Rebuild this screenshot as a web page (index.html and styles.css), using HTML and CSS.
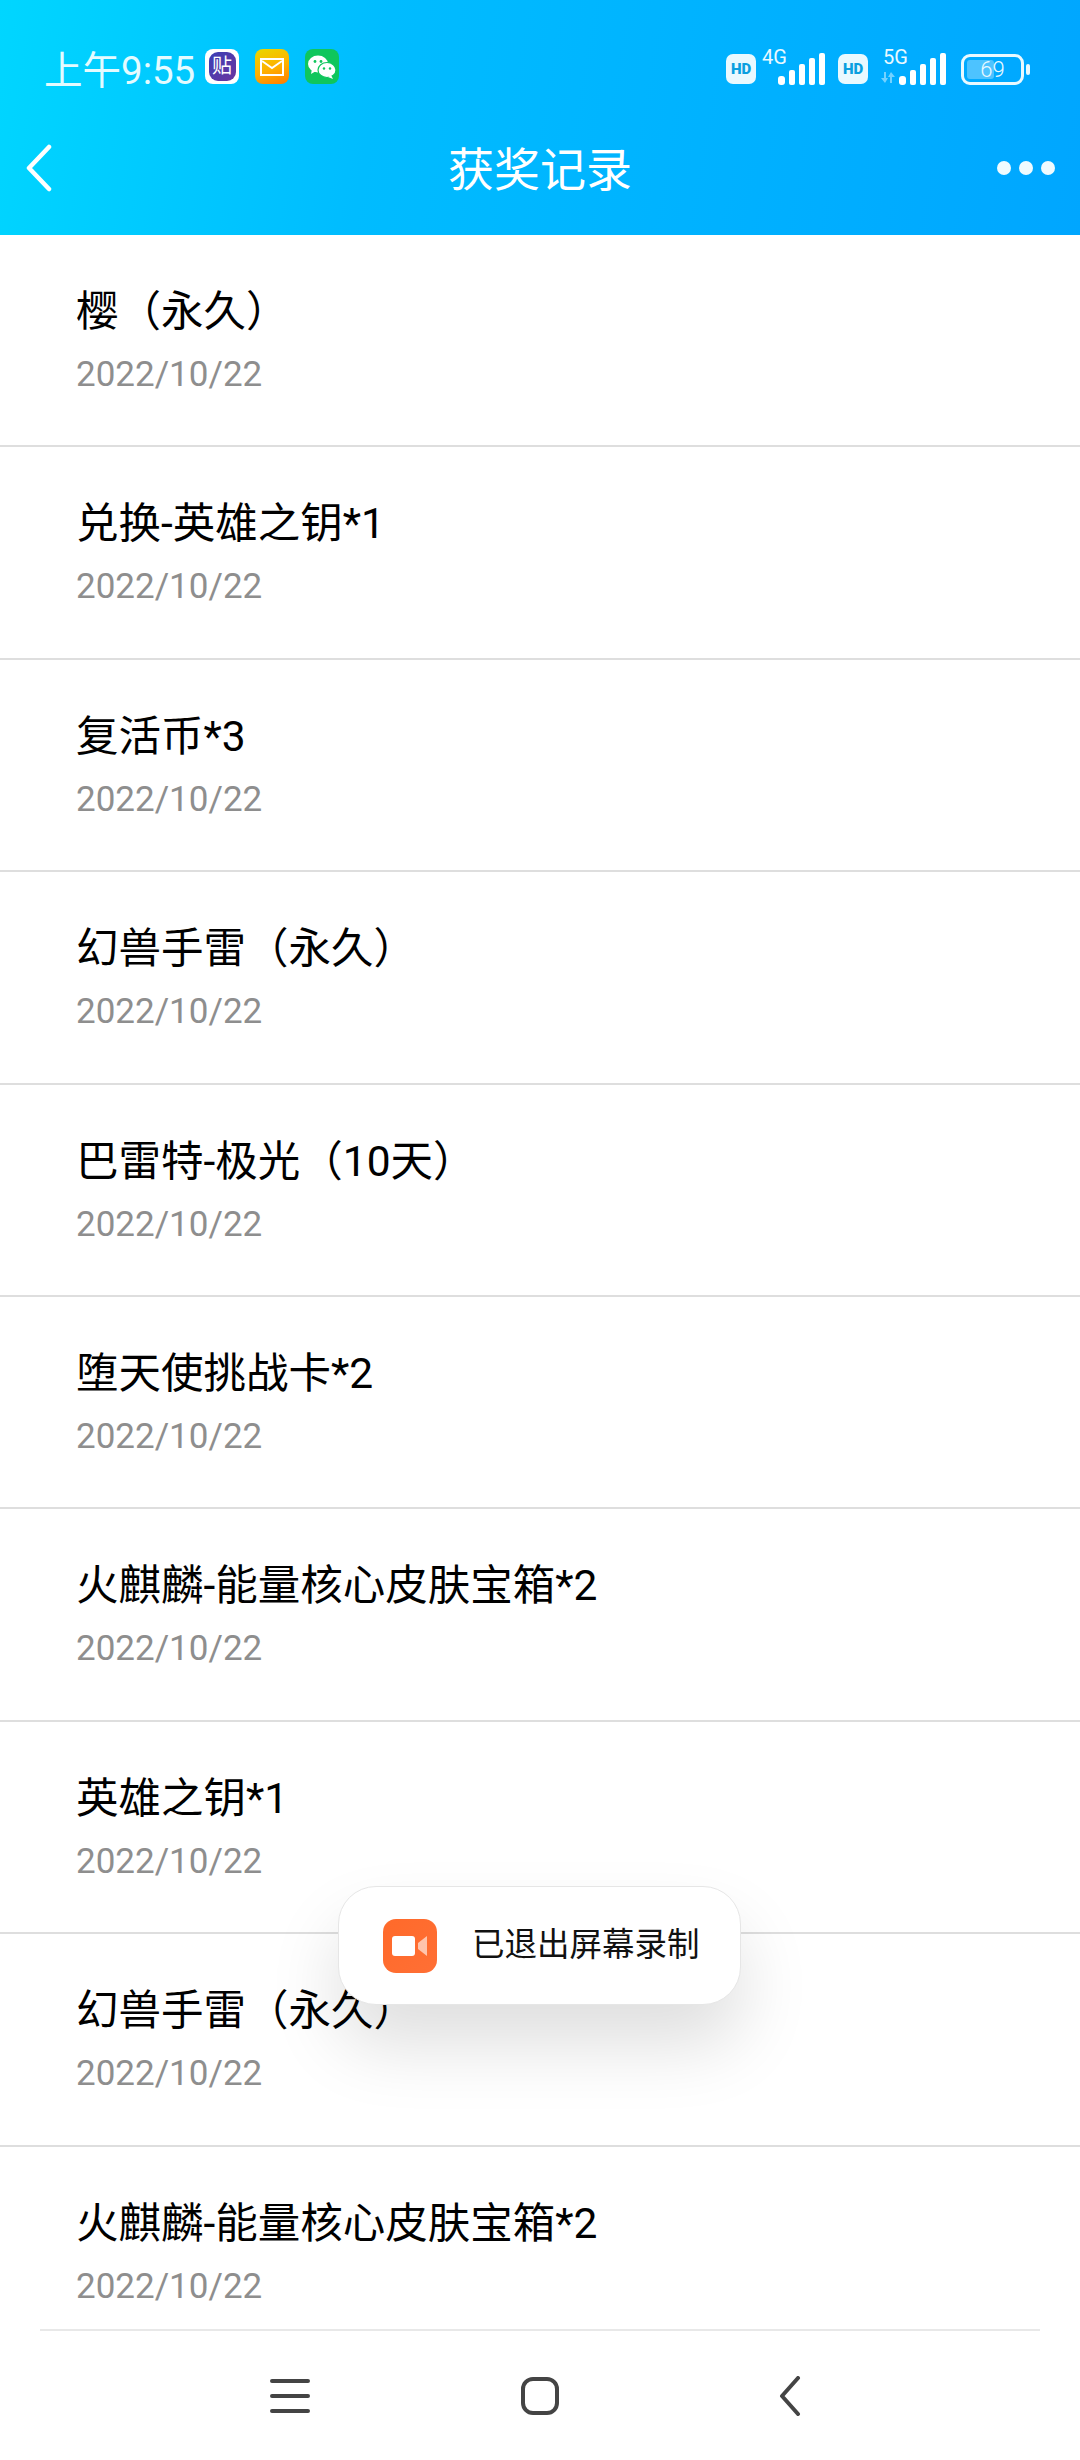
FILE: index.html
```html
<!DOCTYPE html>
<html lang="zh-CN">
<head>
    <meta charset="UTF-8">
    <meta name="viewport" content="width=device-width, initial-scale=1.0">
    <title>获奖记录</title>
    <link rel="stylesheet" href="styles.css">
</head>
<body>
    <div class="page">
        <div class="header">
            <div class="status-bar">
                <div class="status-left">
                    <span class="time">上午9:55</span>
                    <span class="app-icon app-tieba"><span class="tieba-inner">贴</span></span>
                    <span class="app-icon app-mail">
                        <svg width="24" height="18" viewBox="0 0 24 18" fill="none" stroke="#fff" stroke-width="2"><rect x="1" y="1" width="22" height="16"/><path d="M2 3l10 7 10-7"/></svg>
                    </span>
                    <span class="app-icon app-wechat">
                        <svg width="28" height="24" viewBox="0 0 28 24" fill="#fff"><ellipse cx="10" cy="9" rx="10" ry="8.5"/><path d="M4 14l-1 5 5-3z"/><ellipse cx="19" cy="15" rx="9" ry="7.5" stroke="#0fc65c" stroke-width="1.2"/><path d="M23 20l2 4-5-2z"/><g fill="#0fc65c"><circle cx="7" cy="6.5" r="1.4"/><circle cx="13" cy="6.5" r="1.4"/><circle cx="16" cy="13.5" r="1.2"/><circle cx="22" cy="13.5" r="1.2"/></g></svg>
                    </span>
                </div>
                <div class="status-right">
                    <span class="hd">HD</span>
                    <span class="net net-4g">
                        <span class="net-label">4G</span>
                        <svg class="signal" width="48" height="32" viewBox="0 0 48 32" fill="#fff"><rect x="0" y="23" width="7" height="9" rx="3"/><rect x="11" y="17" width="6" height="15" rx="2"/><rect x="21" y="11" width="6" height="21" rx="2"/><rect x="31" y="5" width="6" height="27" rx="2"/><rect x="41" y="0" width="6" height="32" rx="2"/></svg>
                    </span>
                    <span class="hd">HD</span>
                    <span class="net net-5g">
                        <span class="net-label">5G</span>
                        <svg class="arrows" width="16" height="11" viewBox="0 0 16 11" fill="#fff" opacity="0.45"><path d="M4 0h2v6h2l-3 5-4-5h3z"/><path d="M10 11h2V5h3l-4-5-3 5h2z"/></svg>
                        <svg class="signal" width="48" height="32" viewBox="0 0 48 32" fill="#fff"><rect x="0" y="23" width="7" height="9" rx="3"/><rect x="11" y="17" width="6" height="15" rx="2"/><rect x="21" y="11" width="6" height="21" rx="2"/><rect x="31" y="5" width="6" height="27" rx="2"/><rect x="41" y="0" width="6" height="32" rx="2"/></svg>
                    </span>
                    <span class="battery"><span class="battery-fill"></span><span class="battery-num">69</span></span>
                    <span class="battery-nub"></span>
                </div>
            </div>
            <div class="toolbar">
                <svg class="back" width="26" height="48" viewBox="0 0 26 48" fill="none" stroke="#fff" stroke-width="4.5" stroke-linecap="round" stroke-linejoin="round"><path d="M23 3L3 24l20 21"/></svg>
                <h1>获奖记录</h1>
                <div class="more"><i></i><i></i><i></i></div>
            </div>
        </div>

        <div class="list">
            <div class="row"><p class="name">樱（永久）</p><p class="date">2022/10/22</p></div>
            <div class="row"><p class="name">兑换-英雄之钥*1</p><p class="date">2022/10/22</p></div>
            <div class="row"><p class="name">复活币*3</p><p class="date">2022/10/22</p></div>
            <div class="row"><p class="name">幻兽手雷（永久）</p><p class="date">2022/10/22</p></div>
            <div class="row"><p class="name">巴雷特-极光（10天）</p><p class="date">2022/10/22</p></div>
            <div class="row"><p class="name">堕天使挑战卡*2</p><p class="date">2022/10/22</p></div>
            <div class="row"><p class="name">火麒麟-能量核心皮肤宝箱*2</p><p class="date">2022/10/22</p></div>
            <div class="row"><p class="name">英雄之钥*1</p><p class="date">2022/10/22</p></div>
            <div class="row"><p class="name">幻兽手雷（永久）</p><p class="date">2022/10/22</p></div>
            <div class="row"><p class="name">火麒麟-能量核心皮肤宝箱*2</p><p class="date">2022/10/22</p></div>
        </div>

        <div class="nav">
            <svg width="40" height="36" viewBox="0 0 40 36" fill="none" stroke="#444" stroke-width="4" stroke-linecap="round"><path d="M2 3h36M2 18h36M2 33h36"/></svg>
            <svg width="40" height="40" viewBox="0 0 40 40" fill="none" stroke="#444" stroke-width="4"><rect x="3" y="3" width="34" height="34" rx="10"/></svg>
            <svg width="40" height="40" viewBox="0 0 40 40" fill="none" stroke="#444" stroke-width="4" stroke-linecap="round" stroke-linejoin="round"><path d="M28 2L12 20l16 18"/></svg>
        </div>

        <div class="toast">
            <span class="toast-icon">
                <svg width="36" height="22" viewBox="0 0 36 22" fill="#fff"><rect x="0" y="1" width="23" height="20" rx="3"/><path d="M26 8l9-7v20l-9-7z" opacity="0.6"/></svg>
            </span>
            <span class="toast-text">已退出屏幕录制</span>
        </div>
    </div>
</body>
</html>
```

FILE: styles.css
```css
* {
    margin: 0;
    padding: 0;
    box-sizing: border-box;
}

body {
    font-family: Roboto, "Noto Sans CJK SC", sans-serif;
    background: #fff;
}

.page {
    position: relative;
    width: 1080px;
    height: 2460px;
    display: flex;
    flex-direction: column;
    overflow: hidden;
}

.header {
    height: 235px;
    flex-shrink: 0;
    color: #fff;
    background: linear-gradient(100deg, #00d6ff 0%, #00bcff 35%, #00a6ff 100%);
}

.status-bar {
    height: 101px;
    padding: 32px 50px 0 44px;
    display: flex;
    justify-content: space-between;
    align-items: center;
}

.status-left {
    display: flex;
    align-items: center;
}

.time {
    font-size: 38.5px;
    width: 161px;
    color: #e4fbff;
    white-space: nowrap;
}

.app-icon {
    width: 34px;
    height: 35px;
    border-radius: 8px;
    margin-right: 16px;
    display: flex;
    align-items: center;
    justify-content: center;
}

.app-tieba {
    background: #fff;
}

.tieba-inner {
    width: 27px;
    height: 29px;
    border-radius: 9px;
    background: linear-gradient(135deg, #3a3fb5, #6a35a0);
    color: #fff;
    font-size: 20px;
    line-height: 29px;
    text-align: center;
}

.app-mail {
    background: linear-gradient(160deg, #e8d800 0%, #ffb000 55%, #ff7a00 100%);
}

.app-wechat {
    background: #0fc65c;
}

.status-right {
    display: flex;
    align-items: flex-end;
    height: 36px;
}

.hd {
    width: 30px;
    height: 30px;
    margin-bottom: 1px;
    border-radius: 7px;
    background: #e9f9ff;
    color: #0a9fe0;
    font-size: 15px;
    font-weight: 900;
    line-height: 30px;
    text-align: center;
}

.net {
    position: relative;
    display: block;
    height: 32px;
}

.net-4g {
    width: 48px;
    margin: 0 12px 0 22px;
}

.net-5g {
    width: 48px;
    margin: 0 14px 0 31px;
}

.net-label {
    position: absolute;
    top: -6px;
    left: -16px;
    font-size: 20px;
    line-height: 20px;
    color: #e9f9ff;
}

.arrows {
    position: absolute;
    left: -19px;
    bottom: 2px;
}

.signal {
    display: block;
}

.battery {
    position: relative;
    width: 63px;
    height: 31px;
    border: 3px solid #e9f9ff;
    border-radius: 9px;
    display: block;
}

.battery-fill {
    position: absolute;
    left: 3px;
    top: 3px;
    bottom: 3px;
    width: 27px;
    border-radius: 3px;
    background: rgba(255, 255, 255, 0.3);
}

.battery-num {
    position: absolute;
    left: 0;
    right: 0;
    top: 0;
    font-size: 22px;
    font-weight: 300;
    line-height: 25px;
    text-align: center;
    color: #e9f9ff;
}

.battery-nub {
    width: 4px;
    height: 11px;
    margin: 0 0 10px 2px;
    border-radius: 2px;
    background: #e9f9ff;
}

.toolbar {
    height: 134px;
    padding: 0 25px 0 26px;
    display: flex;
    justify-content: space-between;
    align-items: center;
    position: relative;
}

.toolbar h1 {
    position: absolute;
    left: 0;
    right: 0;
    margin-top: -4px;
    font-size: 46px;
    font-weight: 400;
    text-align: center;
}

.more {
    display: flex;
    gap: 8px;
}

.more i {
    width: 14px;
    height: 14px;
    border-radius: 50%;
    background: #f0fbff;
}

.list {
    flex: 1;
    overflow: hidden;
}

.row {
    height: 212.4px;
    padding: 47px 0 0 76px;
    border-bottom: 2px solid #dedede;
}

.name {
    font-size: 42.5px;
    line-height: 60px;
    color: #000;
}

.date {
    margin-top: 10px;
    font-size: 35px;
    line-height: 46px;
    color: #8e8e8e;
}

.nav {
    height: 131px;
    flex-shrink: 0;
    margin: 0 40px;
    border-top: 2px solid #e8e8e8;
    display: flex;
    justify-content: center;
    align-items: center;
    gap: 210px;
}

.toast {
    position: absolute;
    left: 338px;
    top: 1886px;
    width: 403px;
    height: 119px;
    padding-left: 44px;
    display: flex;
    align-items: center;
    background: #fff;
    border: 1px solid #e6e6e6;
    border-radius: 38px;
    box-shadow: 0 40px 70px rgba(0, 0, 0, 0.13);
}

.toast-icon {
    width: 54px;
    height: 54px;
    margin-right: 35px;
    border-radius: 13px;
    background: linear-gradient(135deg, #ff6a2a, #ff6f35);
    display: flex;
    align-items: center;
    justify-content: center;
}

.toast-text {
    font-size: 32.5px;
    line-height: 40px;
    margin-top: -2px;
    color: #111;
    white-space: nowrap;
}
```
